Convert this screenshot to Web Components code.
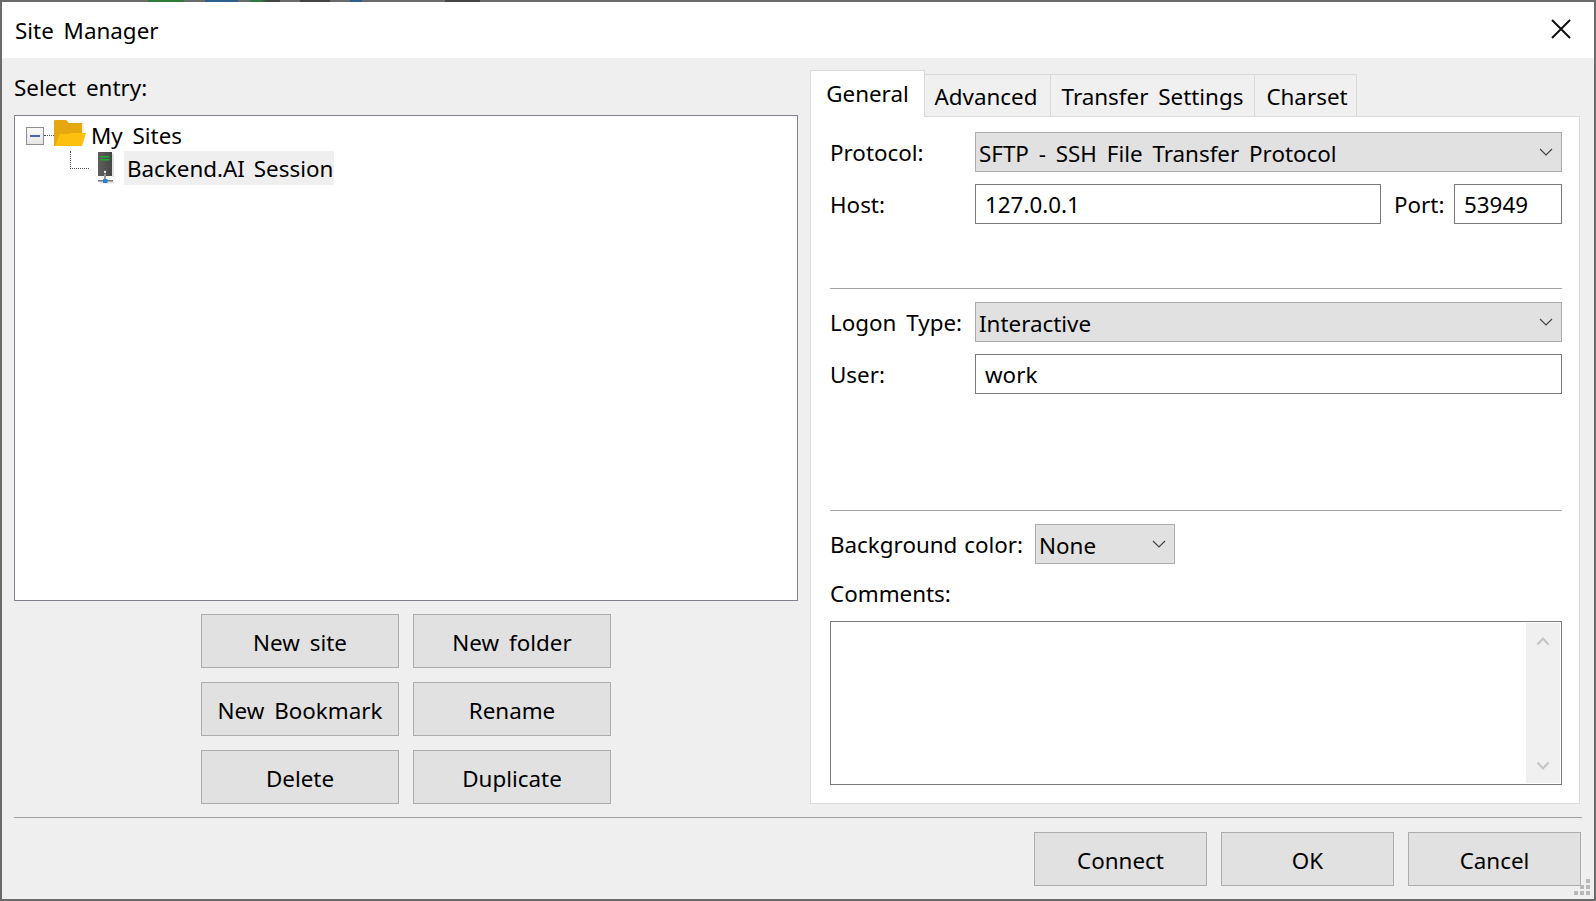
<!DOCTYPE html>
<html>
<head>
<meta charset="utf-8">
<title>Site Manager</title>
<style>
  html, body { margin: 0; padding: 0; background: #6b6b6b; }
  body { font-family: "Noto Sans", "Noto Sans CJK KR", sans-serif; font-size: 24px; color: #000; }
</style>
</head>
<body>
<site-manager></site-manager>

<script>
const TEXT_STYLE = `font-family: "Noto Sans", "Noto Sans CJK KR", sans-serif; font-size: 22.4px; word-spacing: 4px; white-space: nowrap;`

class WinButton extends HTMLElement {
  constructor() {
    super()
    this.attachShadow({ mode: "open" })
    this.shadowRoot.innerHTML = `
      <style>
        :host {
          display: flex;
          align-items: center;
          justify-content: center;
          box-sizing: border-box;
          width: 198px;
          height: 54px;
          padding-top: 2px;
          background: #e1e1e1;
          border: 1px solid #adadad;
          ${TEXT_STYLE}
        }
        :host([wide]) { width: 173px; }
      </style>
      <slot></slot>`
  }
}
customElements.define("win-button", WinButton)

class ComboBox extends HTMLElement {
  constructor() {
    super()
    this.attachShadow({ mode: "open" })
    this.shadowRoot.innerHTML = `
      <style>
        :host {
          display: flex;
          align-items: center;
          justify-content: space-between;
          box-sizing: border-box;
          height: 40px;
          padding: 2px 8px 0 3px;
          background: #e1e1e1;
          border: 1px solid #adadad;
          ${TEXT_STYLE}
        }
        svg { width: 14px; height: 8px; margin-bottom: 2px; }
        path { fill: none; stroke: #444; stroke-width: 1.2; }
      </style>
      <slot></slot>
      <svg viewBox="0 0 14 8"><path d="M1 1l6 6 6-6"/></svg>`
  }
}
customElements.define("combo-box", ComboBox)

class TextField extends HTMLElement {
  constructor() {
    super()
    this.attachShadow({ mode: "open" })
    this.shadowRoot.innerHTML = `
      <style>
        :host {
          display: flex;
          align-items: center;
          box-sizing: border-box;
          height: 40px;
          padding: 0 9px;
          background: #fff;
          border: 1px solid #7a7a7a;
          ${TEXT_STYLE}
        }
      </style>
      <slot></slot>`
  }
}
customElements.define("text-field", TextField)

class FormRow extends HTMLElement {
  constructor() {
    super()
    this.attachShadow({ mode: "open" })
    this.shadowRoot.innerHTML = `
      <style>
        :host {
          display: grid;
          grid-template-columns: 145px 1fr;
          align-items: center;
          ${TEXT_STYLE}
        }
        .fields { display: flex; align-items: center; }
      </style>
      <slot name="label"></slot>
      <div class="fields"><slot></slot></div>`
  }
}
customElements.define("form-row", FormRow)

class TreeRow extends HTMLElement {
  constructor() {
    super()
    this.attachShadow({ mode: "open" })
    this.shadowRoot.innerHTML = `
      <style>
        :host {
          display: flex;
          align-items: center;
          ${TEXT_STYLE}
        }
        :host([selected]) .label { background: #efefef; margin-left: 9px; padding: 0 1px 0 3px; height: 34px; line-height: 36px; word-spacing: 3px; }
        .label { white-space: nowrap; }
      </style>
      <slot name="lead"></slot>
      <span class="label"><slot></slot></span>`
  }
}
customElements.define("tree-row", TreeRow)

class SiteTree extends HTMLElement {
  constructor() {
    super()
    this.attachShadow({ mode: "open" })
    this.shadowRoot.innerHTML = `
      <style>
        :host {
          display: block;
          box-sizing: border-box;
          height: 486px;
          background: #fff;
          border: 1px solid #82828f;
        }
        .first { height: 31px; padding: 4px 0 0 11px; }
        .lead { display: flex; align-items: center; }
        .box {
          box-sizing: border-box;
          width: 18px;
          height: 18px;
          display: flex;
          align-items: center;
          justify-content: center;
          border: 1px solid #8e8f8f;
          background: linear-gradient(#fafafa, #e6e6e6);
        }
        .box i { display: block; width: 10px; height: 2px; background: #4a63ad; }
        .dash { width: 10px; border-top: 1px dotted #555; }
        .folder { width: 32px; height: 27px; margin: -4px 5px 0 0; }
        .second { margin-left: 55px; }
        .elbow {
          box-sizing: border-box;
          width: 19px;
          height: 18px;
          align-self: flex-start;
          border-left: 1px dotted #555;
          border-bottom: 1px dotted #555;
        }
        .server { width: 17px; height: 32px; margin: 1px 0 0 9px; }
      </style>
      <tree-row class="first">
        <span class="lead" slot="lead">
          <span class="box"><i></i></span>
          <span class="dash"></span>
          <svg class="folder" viewBox="0 0 32 27">
            <path fill="#eef0e6" d="M28 3h2v10h-2z"/>
            <path fill="#e5a80f" d="M0 1q0-1 1-1h11l3 3h13v23H0z"/>
            <path fill="#fec00f" d="M6 14h8l3-1h15l-4 13H1z"/>
          </svg>
        </span>
        My Sites
      </tree-row>
      <tree-row selected class="second">
        <span class="lead" slot="lead" style="align-self:flex-start">
          <span class="elbow"></span>
          <svg class="server" viewBox="0 0 17 32">
            <defs>
              <linearGradient id="body"><stop offset="0" stop-color="#5f5f5f"/><stop offset="1" stop-color="#464646"/></linearGradient>
            </defs>
            <path fill="#e2e2e2" d="M14 2h2v23h-2zM2 30h14v1.5H2z"/>
            <path fill="url(#body)" d="M0 0h14v24H0z"/>
            <path fill="#1fae33" d="M2.5 4h9v1.5h-9zM2.5 7h9v1.5h-9z"/>
            <circle cx="7" cy="20" r="1.2" fill="#e8e8e8"/>
            <path fill="#999" d="M6 22h2v6H6z"/>
            <path fill="#777" d="M0 28h15v1.6H0z"/>
            <path fill="#2b7fd4" d="M5 27h4.4v4H5z"/>
          </svg>
        </span>
        Backend.AI Session
      </tree-row>`
  }
}
customElements.define("site-tree", SiteTree)

class TabStrip extends HTMLElement {
  constructor() {
    super()
    this.attachShadow({ mode: "open" })
    this.shadowRoot.innerHTML = `
      <style>
        :host {
          display: flex;
          align-items: flex-end;
          position: relative;
          z-index: 1;
          height: 47px;
          margin-bottom: -1px;
          ${TEXT_STYLE}
        }
        span {
          box-sizing: border-box;
          display: flex;
          align-items: center;
          justify-content: center;
          height: 43px;
          padding-top: 2px;
          border: 1px solid #d9d9d9;
          border-left: none;
          background: #f0f0f0;
        }
        .active {
          height: 47px;
          width: 115px;
          background: #fff;
          border-left: 1px solid #d9d9d9;
          border-bottom: none;
          padding: 0 0 2px;
        }
      </style>
      <span class="active">General</span>
      <span style="width:126px;padding-right:3px">Advanced</span>
      <span style="width:204px">Transfer Settings</span>
      <span style="width:102px;padding-left:3px">Charset</span>`
  }
}
customElements.define("tab-strip", TabStrip)

class CommentBox extends HTMLElement {
  constructor() {
    super()
    this.attachShadow({ mode: "open" })
    this.shadowRoot.innerHTML = `
      <style>
        :host {
          display: flex;
          justify-content: flex-end;
          box-sizing: border-box;
          height: 164px;
          padding: 1px;
          background: #fff;
          border: 1px solid #7a7a7a;
        }
        .bar {
          display: flex;
          flex-direction: column;
          justify-content: space-between;
          align-items: center;
          width: 34px;
          padding: 13px 0 12px;
          box-sizing: border-box;
          background: #f0f0f0;
        }
        svg { width: 14px; height: 10px; }
        path { fill: none; stroke: #c4c4c4; stroke-width: 2; }
      </style>
      <div class="bar">
        <svg viewBox="0 0 14 10"><path d="M1.5 8.5l5.5-6 5.5 6"/></svg>
        <svg viewBox="0 0 14 10"><path d="M1.5 1.5l5.5 6 5.5-6"/></svg>
      </div>`
  }
}
customElements.define("comment-box", CommentBox)

class SiteManager extends HTMLElement {
  constructor() {
    super()
    this.attachShadow({ mode: "open" })
    this.shadowRoot.innerHTML = `
      <style>
        :host {
          display: block;
          position: relative;
          box-sizing: border-box;
          width: 1596px;
          height: 901px;
          padding: 2px;
          overflow: hidden;
          background: #6b6b6b linear-gradient(90deg,
            #6b6b6b 148px, #2e7d3a 148px, #2e7d3a 184px, #6b6b6b 184px,
            #6b6b6b 205px, #2a5f8f 205px, #2a5f8f 238px, #6b6b6b 238px,
            #6b6b6b 250px, #2e7d3a 250px, #2e7d3a 260px, #444 268px,
            #444 280px, #6b6b6b 280px, #6b6b6b 300px, #444 300px, #444 330px, #6b6b6b 330px,
            #6b6b6b 350px, #2a5f8f 350px, #2a5f8f 362px, #6b6b6b 362px,
            #6b6b6b 445px, #444 445px, #444 480px, #6b6b6b 480px) top / 100% 2px no-repeat;
          ${TEXT_STYLE}
        }
        .window { height: 100%; display: flex; flex-direction: column; background: #efefef; }
        .title {
          flex: none;
          height: 56px;
          display: flex;
          align-items: center;
          justify-content: space-between;
          padding: 0 23px 0 13px;
          background: #fff;
          box-sizing: border-box;
        }
        .title svg { width: 20px; height: 20px; margin-bottom: 2px; }
        .body { flex: 1; display: flex; padding: 0 12px; min-height: 0; }
        .left { width: 784px; margin-right: 12px; }
        .select { height: 57px; line-height: 59px; }
        .grid {
          display: grid;
          grid-template-columns: 198px 198px;
          gap: 14px;
          justify-content: center;
          margin-top: 13px;
        }
        .right { width: 770px; padding-top: 12px; }
        .panel {
          box-sizing: border-box;
          height: 688px;
          padding: 15px 17px 0 19px;
          background: #fff;
          border: 1px solid #d9d9d9;
        }
        hr { border: none; border-top: 1px solid #a0a0a0; margin: 0; }
        .port { width: 47px; margin: 0 13px; }
        .grip { position: absolute; right: 5px; bottom: 5px; width: 18px; height: 17px; }
        .footer { flex: none; margin: 0 12px; border-top: 1px solid #a0a0a0; padding: 14px 1px 13px 0; display: flex; justify-content: flex-end; gap: 14px; }
      </style>
      <div class="window">
        <div class="title">
          <span>Site Manager</span>
          <svg viewBox="0 0 20 20"><path d="M1 1l18 18M19 1L1 19" stroke="#111" stroke-width="2" fill="none"/></svg>
        </div>
        <div class="body">
          <div class="left">
            <div class="select">Select entry:</div>
            <site-tree></site-tree>
            <div class="grid">
              <win-button>New site</win-button>
              <win-button>New folder</win-button>
              <win-button>New Bookmark</win-button>
              <win-button>Rename</win-button>
              <win-button>Delete</win-button>
              <win-button>Duplicate</win-button>
            </div>
          </div>
          <div class="right">
            <tab-strip></tab-strip>
            <div class="panel">
              <form-row>
                <span slot="label">Protocol:</span>
                <combo-box style="flex:1">SFTP - SSH File Transfer Protocol</combo-box>
              </form-row>
              <form-row style="margin-top:12px">
                <span slot="label">Host:</span>
                <text-field style="flex:1">127.0.0.1</text-field>
                <span class="port">Port:</span>
                <text-field style="width:108px">53949</text-field>
              </form-row>
              <hr style="margin-top:64px">
              <form-row style="margin-top:13px">
                <span slot="label">Logon Type:</span>
                <combo-box style="flex:1">Interactive</combo-box>
              </form-row>
              <form-row style="margin-top:12px">
                <span slot="label">User:</span>
                <text-field style="flex:1">work</text-field>
              </form-row>
              <hr style="margin-top:116px">
              <form-row style="margin-top:13px">
                <span slot="label" style="word-spacing:1px">Background color:</span>
                <combo-box style="width:140px;margin-left:60px">None</combo-box>
              </form-row>
              <div style="height:57px;line-height:59px">Comments:</div>
              <comment-box></comment-box>
            </div>
          </div>
        </div>
        <div class="footer">
          <win-button wide>Connect</win-button>
          <win-button wide>OK</win-button>
          <win-button wide>Cancel</win-button>
        </div>
      </div>
      <svg class="grip" viewBox="0 0 18 17" fill="#b8b8b8">
        <path d="M13 0h4v4h-4zM7 6h4v4H7zM13 6h4v4h-4zM1 12h4v4H1zM7 12h4v4H7zM13 12h4v4h-4z"/>
      </svg>`
  }
}
customElements.define("site-manager", SiteManager)
</script>
</body>
</html>
